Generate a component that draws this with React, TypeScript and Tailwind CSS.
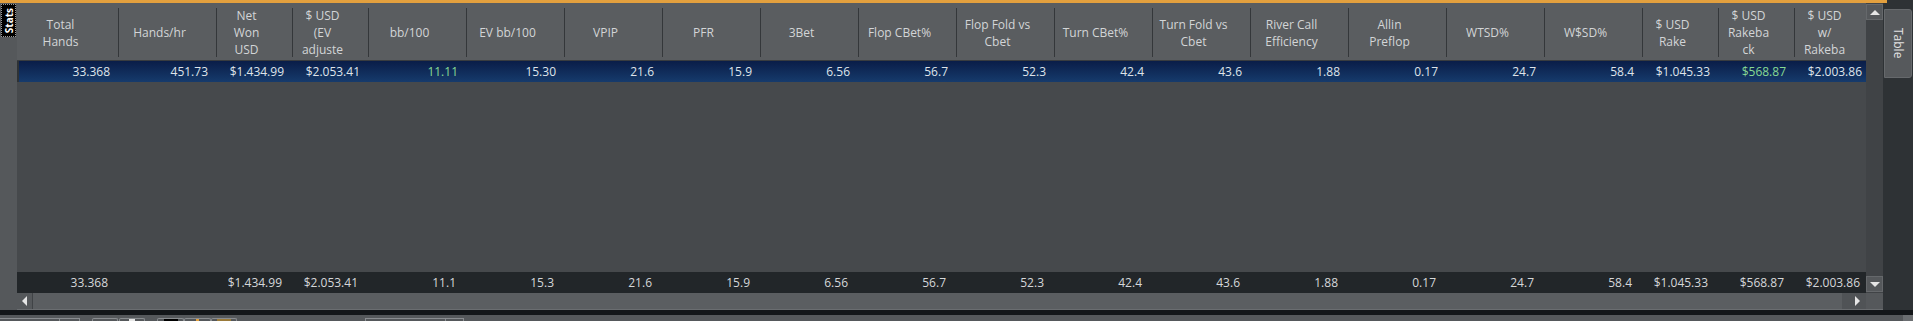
import React from 'react';

interface Col {
  head: string[];
  w: number;
  value: string;
  total: string;
  green?: boolean;
}

const cols: Col[] = [
  { head: ['Total', 'Hands'], w: 99, value: '33.368', total: '33.368' },
  { head: ['Hands/hr'], w: 98, value: '451.73', total: '' },
  { head: ['Net', 'Won', 'USD'], w: 76, value: '$1.434.99', total: '$1.434.99' },
  { head: ['$ USD', '(EV', 'adjuste'], w: 76, value: '$2.053.41', total: '$2.053.41' },
  { head: ['bb/100'], w: 98, value: '11.11', total: '11.1', green: true },
  { head: ['EV bb/100'], w: 98, value: '15.30', total: '15.3' },
  { head: ['VPIP'], w: 98, value: '21.6', total: '21.6' },
  { head: ['PFR'], w: 98, value: '15.9', total: '15.9' },
  { head: ['3Bet'], w: 98, value: '6.56', total: '6.56' },
  { head: ['Flop CBet%'], w: 98, value: '56.7', total: '56.7' },
  { head: ['Flop Fold vs', 'Cbet'], w: 98, value: '52.3', total: '52.3' },
  { head: ['Turn CBet%'], w: 98, value: '42.4', total: '42.4' },
  { head: ['Turn Fold vs', 'Cbet'], w: 98, value: '43.6', total: '43.6' },
  { head: ['River Call', 'Efficiency'], w: 98, value: '1.88', total: '1.88' },
  { head: ['Allin', 'Preflop'], w: 98, value: '0.17', total: '0.17' },
  { head: ['WTSD%'], w: 98, value: '24.7', total: '24.7' },
  { head: ['W$SD%'], w: 98, value: '58.4', total: '58.4' },
  { head: ['$ USD', 'Rake'], w: 76, value: '$1.045.33', total: '$1.045.33' },
  { head: ['$ USD', 'Rakeba', 'ck'], w: 76, value: '$568.87', total: '$568.87', green: true },
  { head: ['$ USD', 'w/', 'Rakeba'], w: 76, value: '$2.003.86', total: '$2.003.86' },
];

// small white arrow used by the scroll buttons
const Arrow = ({ dir }: { dir: 'up' | 'down' | 'left' | 'right' }) => {
  const pts = {
    up: '0,6 5,1 10,6',
    down: '0,1 5,6 10,1',
    left: '6,0 1,5 6,10',
    right: '1,0 6,5 1,10',
  }[dir];
  const vertical = dir === 'up' || dir === 'down';
  return (
    <svg width={vertical ? 10 : 7} height={vertical ? 7 : 10} viewBox={vertical ? '0 0 10 7' : '0 0 7 10'}>
      <polygon points={pts} fill="#e6e6e6" />
    </svg>
  );
};

export default function App() {
  return (
    <div className="w-[1913px] h-[321px] overflow-hidden bg-[#2e3235] flex flex-col font-['Open_Sans','Noto_Sans',sans-serif] text-[12px]">
      {/* top accent */}
      <div className="h-[3px] flex shrink-0">
        <div className="w-[1887px] bg-[#e3a03e]" />
        <div className="flex-1 bg-[#2e3235]" />
      </div>

      <div className="flex h-[307px] shrink-0">
        {/* left dock with Stats tab */}
        <div className="w-[17px] bg-[#55585b] pt-[1px] pl-[1px]">
          <div className="w-[15px] h-[33px] bg-black border border-dotted border-[#9c9c9c] flex items-center justify-center">
            <span className="[writing-mode:vertical-rl] rotate-180 text-white font-bold text-[10px] leading-none font-['Noto_Sans',sans-serif]">
              Stats
            </span>
          </div>
        </div>

        {/* grid + scrollbars */}
        <div className="w-[1866px] flex flex-col">
          <div className="h-[290px] flex">
            <div className="w-[1849px] flex flex-col overflow-hidden">
              {/* header */}
              <div className="h-[57px] bg-[#5a5d60] pl-[2px] flex text-[#d3d5d7]">
                {cols.map((c, i) => (
                  <div
                    key={i}
                    style={{ width: c.w }}
                    className={`shrink-0 mt-[5px] mb-[3px] pr-[16px] flex items-center justify-center ${i > 0 ? 'border-l border-[#34373a]' : ''}`}
                  >
                    <div className="text-center leading-[17px] whitespace-nowrap">
                      {c.head.map((l, j) => (
                        <div key={j}>{l}</div>
                      ))}
                    </div>
                  </div>
                ))}
              </div>
              <div className="h-[1px] bg-[#393c3f]" />

              {/* selected row */}
              <div className="h-[21px] ml-[2px] flex bg-linear-to-b from-[#0a1d48] to-[#163b6c] text-[#dfe4ea]">
                {cols.map((c, i) => (
                  <div
                    key={i}
                    style={{ width: c.w }}
                    className={`shrink-0 pr-[8px] flex items-center justify-end whitespace-nowrap ${c.green ? 'text-[#86d993]' : ''}`}
                  >
                    {c.value}
                  </div>
                ))}
              </div>

              <div className="flex-1 bg-[#46494c]" />

              {/* totals */}
              <div className="h-[21px] bg-[#222629] pl-[2px] flex text-[#d5d7d9]">
                {cols.map((c, i) => (
                  <div key={i} style={{ width: c.w }} className="shrink-0 pr-[10px] flex items-center justify-end whitespace-nowrap">
                    {c.total}
                  </div>
                ))}
              </div>
            </div>

            {/* vertical scrollbar */}
            <div className="w-[17px] bg-[#404346] flex flex-col justify-between pt-[1px] pb-[1px]">
              <div className="h-[16px] bg-[#55585b] border border-[#65686b] flex items-center justify-center">
                <Arrow dir="up" />
              </div>
              <div className="h-[16px] bg-[#55585b] border border-[#65686b] flex items-center justify-center">
                <Arrow dir="down" />
              </div>
            </div>
          </div>

          {/* horizontal scrollbar */}
          <div className="h-[17px] flex bg-[#505356] border-b border-[#6a6d70]">
            <div className="w-[16px] bg-[#55585b] border-r border-[#404346] flex items-center justify-center">
              <Arrow dir="left" />
            </div>
            <div className="w-[1809px] bg-[#5b5e61]" />
            <div className="w-[7px]" />
            <div className="w-[17px] bg-[#505356] flex items-center justify-center">
              <Arrow dir="right" />
            </div>
            <div className="flex-1 bg-[#55585b]" />
          </div>
        </div>

        {/* right dock with Table tab */}
        <div className="flex-1 bg-[#2e3235] pt-[6px] pl-[1px]">
          <div className="w-[28px] h-[69px] bg-[#56595c] border border-[#66696c] rounded-r-[3px] flex items-center justify-center">
            <span className="[writing-mode:vertical-rl] text-[#e2e2e2] text-[12px] leading-none">Table</span>
          </div>
        </div>
      </div>

      <div className="h-[5px] shrink-0 bg-[#131619]" />

      {/* bottom toolbar (cut off) */}
      <div className="flex-1 bg-[#55585b] flex items-end relative">
        <div className="flex items-end h-[3px] w-full">
          <div className="w-[60px] h-[3px] border-t border-r border-[#8a8d90]" />
          <div className="w-[20px] h-[3px] border-t border-r border-[#8a8d90]" />
          <div className="w-[12px]" />
          <div className="w-[26px] h-[3px] border-t border-x border-[#8a8d90] rounded-t-[2px]" />
          <div className="w-[1px]" />
          <div className="w-[26px] h-[3px] border-t border-x border-[#8a8d90] rounded-t-[2px] flex justify-center">
            <div className="w-[6px] h-[2px] bg-[#e6e6e6]" />
          </div>
          <div className="w-[12px]" />
          <div className="w-[27px] h-[3px] border-t border-x border-[#8a8d90] rounded-t-[2px] flex justify-center">
            <div className="w-[14px] h-[2px] bg-black" />
          </div>
          <div className="w-[27px] h-[3px] border-t border-x border-[#8a8d90] rounded-t-[2px] flex justify-center">
            <div className="w-[3px] h-[2px] bg-[#e3a03e]" />
          </div>
          <div className="w-[26px] h-[3px] border-t border-x border-[#8a8d90] rounded-t-[2px] flex justify-center">
            <div className="w-[14px] h-[2px] bg-[#9a7a3a]" />
          </div>
          <div className="w-[128px]" />
          <div className="w-[81px] h-[3px] border-t border-x border-[#8a8d90]" />
          <div className="w-[18px] h-[3px] border-t border-r border-[#8a8d90]" />
          <div className="flex-1" />
          <div className="w-[10px] h-[6px] bg-[#6b6e71]" />
        </div>
      </div>
    </div>
  );
}
